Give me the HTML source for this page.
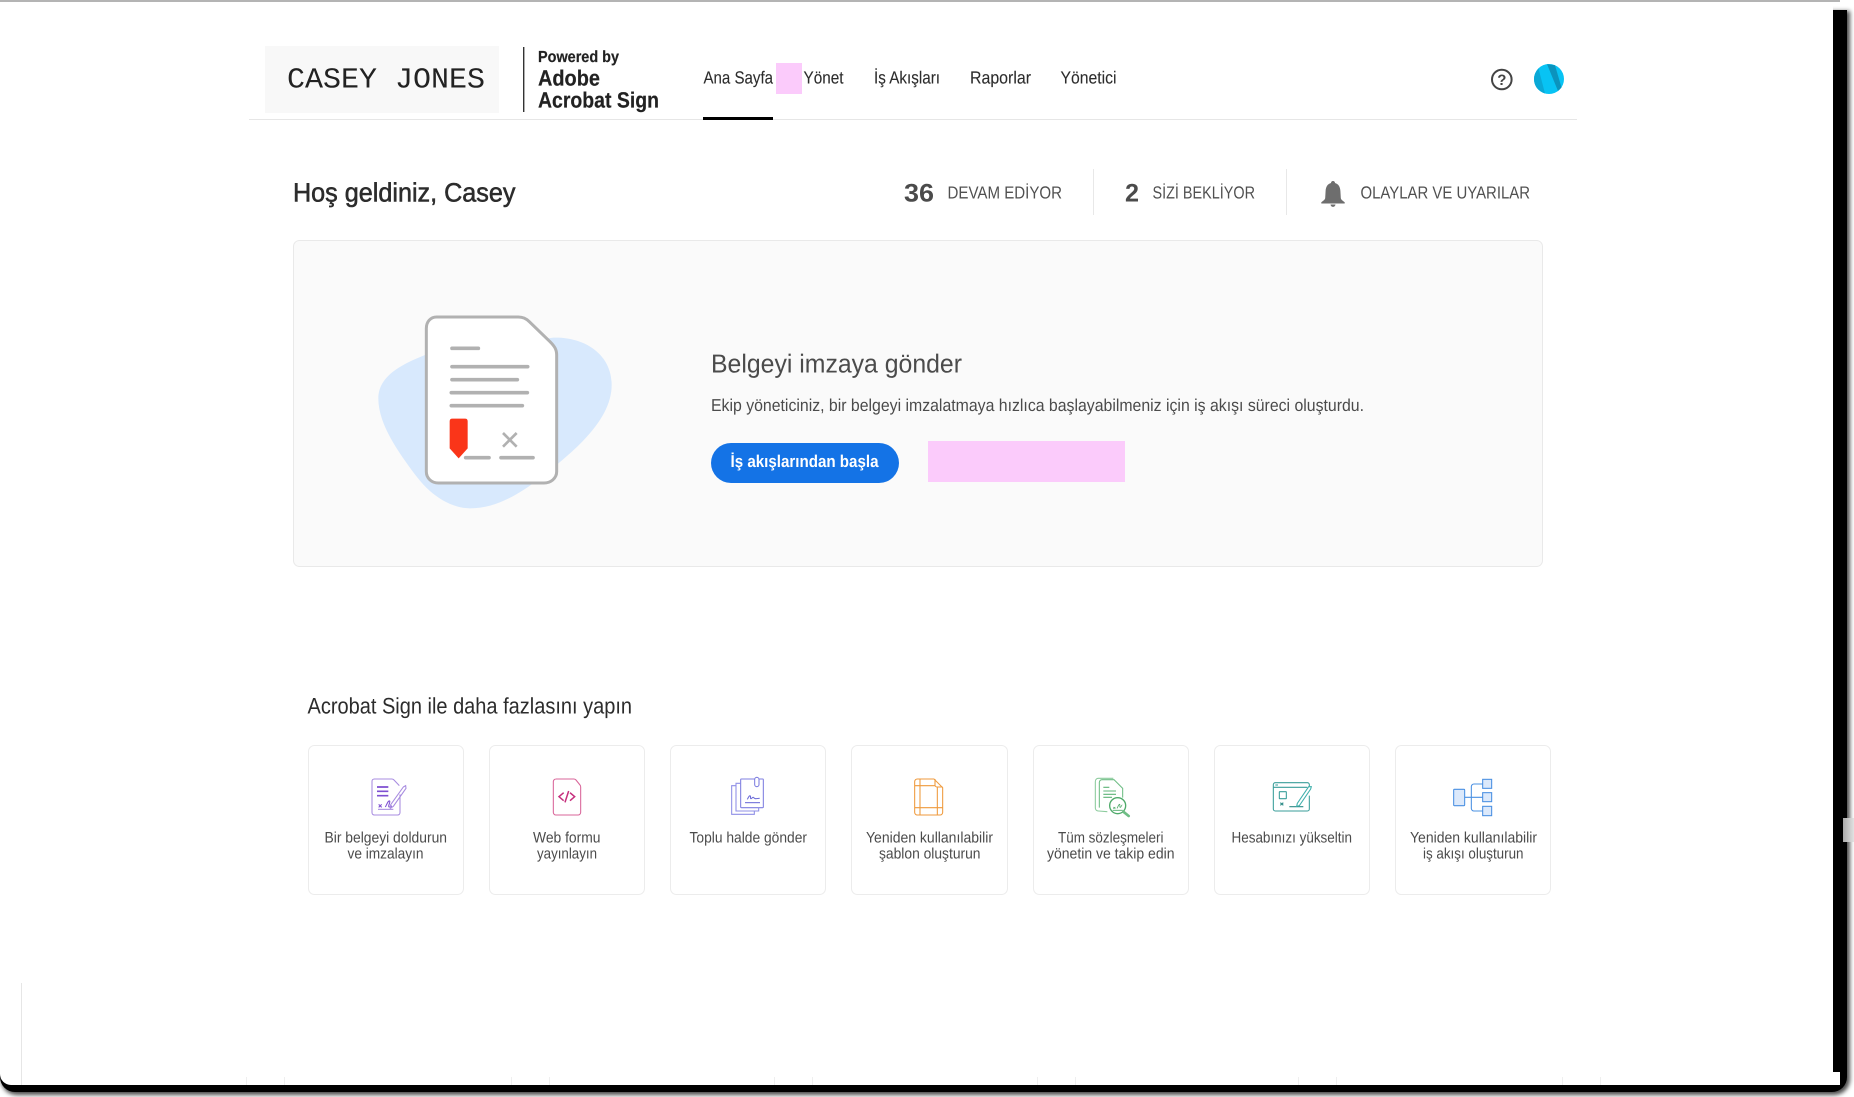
<!DOCTYPE html>
<html lang="tr">
<head>
<meta charset="utf-8">
<title>Adobe Acrobat Sign</title>
<style>
html,body{margin:0;padding:0;width:1854px;height:1097px;overflow:hidden;background:#fff}
#shadow{position:absolute;left:0;top:10px;width:1847px;height:1082px;background:#000;border-radius:0 0 15px 15px;box-shadow:2px 2px 4px 1px rgba(0,0,0,.7)}
#panel{position:absolute;left:0;top:-10px;width:1833px;height:1095px;background:#fff;border-radius:0 0 0 11px}
#notch{position:absolute;left:1833px;top:1072px;width:7px;height:13px;background:#fff}
#topline{position:absolute;left:0;top:0;width:1840px;height:2px;background:#b4b4b4}
#thumb{position:absolute;left:1843px;top:818px;width:11px;height:24px;background:linear-gradient(90deg,#aaa,#e2e2e2)}
svg{position:absolute;left:0;top:0}
text{font-family:"Liberation Sans",sans-serif;fill:#4b4b4b;text-rendering:geometricPrecision}
.nav{font-size:17.5px;fill:#2c2c2c;stroke:#2c2c2c;stroke-width:.1}
.st{font-size:17.5px;fill:#505050}
.num{font-size:25.5px;font-weight:bold;fill:#4b4b4b}
.c{font-size:15.2px;fill:#4b4b4b}
.lg{font-weight:bold;fill:#222;stroke:#222;stroke-width:.2}
</style>
</head>
<body>
<div id="shadow"></div>
<div id="panel"></div>
<div id="notch"></div>
<div id="topline"></div>
<div id="thumb"></div>
<svg width="1854" height="1097" viewBox="0 0 1854 1097" xmlns="http://www.w3.org/2000/svg">
  <!-- header -->
  <rect x="265" y="46" width="234" height="67" fill="#f8f8f8"/>
  <text x="287" y="87.5" style="font-family:'Liberation Mono',monospace;font-size:29px;fill:#222" textLength="198" lengthAdjust="spacingAndGlyphs">CASEY JONES</text>
  <rect x="523" y="47" width="1.4" height="65" fill="#333"/>
  <text class="lg" x="538" y="62" font-size="16" textLength="81" lengthAdjust="spacingAndGlyphs">Powered by</text>
  <text class="lg" x="538" y="85.5" font-size="22" textLength="62" lengthAdjust="spacingAndGlyphs">Adobe</text>
  <text class="lg" x="538" y="107.5" font-size="22" textLength="121" lengthAdjust="spacingAndGlyphs">Acrobat Sign</text>

  <rect x="249" y="119" width="1328" height="1" fill="#e6e6e6"/>
  <rect x="703" y="117" width="70" height="3" fill="#000"/>
  <rect x="776" y="63" width="26" height="31" fill="#fbcbfb"/>

  <text class="nav" x="703.5" y="83.5" textLength="69.5" lengthAdjust="spacingAndGlyphs">Ana Sayfa</text>
  <text class="nav" x="803.5" y="83.5" textLength="40" lengthAdjust="spacingAndGlyphs">Yönet</text>
  <text class="nav" x="874" y="83.5" textLength="66" lengthAdjust="spacingAndGlyphs">İş Akışları</text>
  <text class="nav" x="970" y="83.5" textLength="61" lengthAdjust="spacingAndGlyphs">Raporlar</text>
  <text class="nav" x="1060.5" y="83.5" textLength="56" lengthAdjust="spacingAndGlyphs">Yönetici</text>

  <circle cx="1501.8" cy="79.5" r="9.8" fill="none" stroke="#444" stroke-width="2"/>
  <text x="1501.8" y="85" font-size="15" text-anchor="middle" style="fill:#444;font-weight:bold">?</text>
  <circle cx="1549" cy="79" r="15" fill="#08c3f4"/>
  <path d="M1547 64.1 L1555 65.3 L1561.5 87.5 L1558 91 Z" fill="#0b93bd"/>
  <path d="M1534 79 C1534 75 1536 71 1538.5 68.5 L1545 93.5 C1538 91 1534 86 1534 79 Z" fill="#0aa8d6"/>

  <!-- welcome row -->
  <text x="293" y="201.5" font-size="26.5" style="fill:#2c2c2c;stroke:#2c2c2c;stroke-width:.55" textLength="222.5" lengthAdjust="spacingAndGlyphs">Hoş geldiniz, Casey</text>
  <text class="num" x="904" y="201.5" textLength="30" lengthAdjust="spacingAndGlyphs">36</text>
  <text class="st" x="947.5" y="198.5" textLength="114.5" lengthAdjust="spacingAndGlyphs">DEVAM EDİYOR</text>
  <rect x="1093" y="169" width="1" height="46" fill="#e8e8e8"/>
  <text class="num" x="1125" y="201.5" textLength="14" lengthAdjust="spacingAndGlyphs">2</text>
  <text class="st" x="1152.5" y="198.5" textLength="102.5" lengthAdjust="spacingAndGlyphs">SİZİ BEKLİYOR</text>
  <rect x="1286" y="169" width="1" height="46" fill="#e8e8e8"/>
  <path d="M1333 181 c1.3 0 2 .9 2 2 c3.6 1 5.2 4 5.4 8 l.4 7 c.1 1.5 1.5 2.5 3.9 4.2 v1.3 h-23.4 v-1.3 c2.4-1.7 3.8-2.7 3.9-4.2 l.4-7 c.2-4 1.8-7 5.4-8 c0-1.1 .7-2 2-2z M1330.5 204.5 h5 c-.2 1.5-1.2 2.4-2.5 2.4 s-2.3-.9-2.5-2.4z" fill="#6e6e6e"/>
  <text class="st" x="1360.5" y="198.5" textLength="169.5" lengthAdjust="spacingAndGlyphs">OLAYLAR VE UYARILAR</text>

  <!-- hero -->
  <rect x="293.5" y="240.5" width="1249" height="326" rx="6" fill="#fafafa" stroke="#e9e9e9"/>
  <g transform="translate(340 290) scale(.33333)">
    <path d="M255 195 C180 225 115 260 115 325 C115 400 170 480 230 560 C280 625 340 655 390 655 C470 655 540 610 600 565 C680 500 815 400 815 285 C815 190 730 140 640 143 Z" fill="#d8e9fd"/>
    <path d="M290 81 H535 C550 81 560 87 568 95 L630 155 C643 168 650 178 650 195 V545 C650 565 632 579 612 579 H295 C275 579 259 565 259 545 V115 C259 95 272 81 290 81 Z" fill="#fff" stroke="#b1b1b1" stroke-width="9"/>
    <g stroke="#b1b1b1" stroke-width="11" stroke-linecap="round" fill="none">
      <path d="M336 175 H415"/>
      <path d="M336 230 H563"/>
      <path d="M336 269 H532"/>
      <path d="M334 308 H562"/>
      <path d="M334 347 H547"/>
      <path d="M377 503 H447"/>
      <path d="M483 503 H579"/>
    </g>
    <path d="M489 429 L530 470 M530 429 L489 470" stroke="#b1b1b1" stroke-width="8" fill="none"/>
    <path d="M337 386 H375 Q383 386 383 394 V475 L356 505 L329 475 V394 Q329 386 337 386 Z" fill="#fa3519"/>
  </g>
  <text x="711" y="372.5" font-size="26" style="fill:#4b4b4b" textLength="251" lengthAdjust="spacingAndGlyphs">Belgeyi imzaya gönder</text>
  <text x="711" y="411" font-size="17.2" style="fill:#4b4b4b" textLength="653" lengthAdjust="spacingAndGlyphs">Ekip yöneticiniz, bir belgeyi imzalatmaya hızlıca başlayabilmeniz için iş akışı süreci oluşturdu.</text>
  <rect x="711" y="443" width="188" height="40" rx="20" fill="#1473e6"/>
  <text x="730.5" y="467" font-size="17" style="fill:#fff;font-weight:bold" textLength="148" lengthAdjust="spacingAndGlyphs">İş akışlarından başla</text>
  <rect x="928" y="441" width="197" height="41" fill="#fbcbfb"/>

  <!-- more -->
  <text x="307.5" y="713.5" font-size="22.5" style="fill:#2c2c2c" textLength="324.5" lengthAdjust="spacingAndGlyphs">Acrobat Sign ile daha fazlasını yapın</text>
  <g fill="#fff" stroke="#ececec">
    <rect x="308.5" y="745.5" width="155" height="149" rx="6"/>
    <rect x="489.5" y="745.5" width="155" height="149" rx="6"/>
    <rect x="670.5" y="745.5" width="155" height="149" rx="6"/>
    <rect x="851.5" y="745.5" width="156" height="149" rx="6"/>
    <rect x="1033.5" y="745.5" width="155" height="149" rx="6"/>
    <rect x="1214.5" y="745.5" width="155" height="149" rx="6"/>
    <rect x="1395.5" y="745.5" width="155" height="149" rx="6"/>
  </g>
  <text class="c" x="324.5" y="842.5" textLength="122.5" lengthAdjust="spacingAndGlyphs">Bir belgeyi doldurun</text>
  <text class="c" x="347.5" y="858.5" textLength="76" lengthAdjust="spacingAndGlyphs">ve imzalayın</text>
  <text class="c" x="533" y="842.5" textLength="67.5" lengthAdjust="spacingAndGlyphs">Web formu</text>
  <text class="c" x="537" y="858.5" textLength="60" lengthAdjust="spacingAndGlyphs">yayınlayın</text>
  <text class="c" x="689.5" y="842.5" textLength="117.5" lengthAdjust="spacingAndGlyphs">Toplu halde gönder</text>
  <text class="c" x="866" y="842.5" textLength="127" lengthAdjust="spacingAndGlyphs">Yeniden kullanılabilir</text>
  <text class="c" x="879" y="858.5" textLength="101.5" lengthAdjust="spacingAndGlyphs">şablon oluşturun</text>
  <text class="c" x="1058" y="842.5" textLength="105.5" lengthAdjust="spacingAndGlyphs">Tüm sözleşmeleri</text>
  <text class="c" x="1047" y="858.5" textLength="127.5" lengthAdjust="spacingAndGlyphs">yönetin ve takip edin</text>
  <text class="c" x="1231.5" y="842.5" textLength="120.5" lengthAdjust="spacingAndGlyphs">Hesabınızı yükseltin</text>
  <text class="c" x="1410" y="842.5" textLength="127" lengthAdjust="spacingAndGlyphs">Yeniden kullanılabilir</text>
  <text class="c" x="1423" y="858.5" textLength="100.5" lengthAdjust="spacingAndGlyphs">iş akışı oluşturun</text>

  <!-- icon 1 + 2 -->
  <g transform="translate(350 765) scale(.33333)" fill="none" stroke-width="3.2">
    <path d="M150 88 V143 a7 7 0 0 1 -7 7 H73 a7 7 0 0 1 -7 -7 V49 a7 7 0 0 1 7 -7 H126 a8 8 0 0 1 6 3 L148 62" stroke="#a88ce0"/>
    <path d="M81 66 H115 M81 79 H115 M81 92 H115" stroke="#7e4fd1" stroke-width="5"/>
    <path d="M86 118 l9 9 m0 -9 l-9 9" stroke="#7e4fd1"/>
    <path d="M106 126 c5 -8 8 -20 13 -18 c3 3 -7 17 -1 18 c4 0 5 -3 8 -3" stroke="#7e4fd1"/>
    <path d="M84 133 H130" stroke="#a88ce0"/>
    <path d="M160 66 L167 62 L168 70 L130 124 L121 130 L122 119 Z" stroke="#a88ce0"/>
    <path d="M617 42 H672 a8 8 0 0 1 6 3 L690 60 a8 8 0 0 1 2 6 V142 a8 8 0 0 1 -8 8 H618 a8 8 0 0 1 -8 -8 V50 a8 8 0 0 1 8 -8 Z" stroke="#d9669a"/>
    <path d="M641 83 L627 95 L641 107 M660 83 L674 95 L660 107 M656 78 L645 112" stroke="#c62f7d" stroke-width="4.5"/>
  </g>
  <!-- icon 3 + 4 -->
  <g transform="translate(710 765) scale(.33333)" fill="none" stroke-width="3.2">
    <rect x="92" y="42" width="68" height="86" rx="2" stroke="#7f7fe0"/>
    <path d="M92 55 H78 V138 H146 V128" stroke="#8f8fe6"/>
    <path d="M78 62 H65 V148 H133 V138" stroke="#8f8fe6"/>
    <rect x="134" y="37" width="13" height="28" rx="6.5" fill="#fff" stroke="#7f7fe0"/>
    <path d="M112 103 c4 -7 6 -12 9 -10 c2 2 -1 8 2 8 c3 0 4 -5 7 -4 c2 1 3 4 7 4 c4 0 8 -1 12 -1" stroke="#6c6cd8"/>
    <path d="M105 113 H150" stroke="#6c6cd8"/>
    <path d="M622 42 H672 L698 68 V142 a8 8 0 0 1 -8 8 H622 a8 8 0 0 1 -8 -8 V50 a8 8 0 0 1 8 -8 Z" stroke="#ef9a3d"/>
    <path d="M675 42 V60 a6 6 0 0 0 6 6 H698" stroke="#ef9a3d"/>
    <path d="M630 42 V150 M682 66 V150 M614 62 H675 M614 128 H698" stroke="#ef9a3d"/>
  </g>
  <!-- icon 5,6,7 -->
  <g transform="translate(1070 765) scale(.33333)" fill="none" stroke-width="3.2">
    <path d="M88 128 V52 a8 8 0 0 1 8 -8 H132 L158 70 V98" stroke="#6fbd85"/>
    <path d="M130 40 H86 a9 9 0 0 0 -10 10 V128 a9 9 0 0 0 10 10 L112 140" stroke="#8ccb9d"/>
    <path d="M100 67 H118 M100 78 H138 M100 88 H138 M100 97 H126" stroke="#5fb478"/>
    <circle cx="143" cy="122" r="24" fill="#fff" stroke="#4faa6a" stroke-width="4"/>
    <path d="M130 126 l6 5 m0 -5 l-6 5 M141 130 c3 -4 5 -13 8 -12 c2 2 -1 9 2 9 c3 0 3 -8 6 -7 M128 136 H158" stroke="#4faa6a" stroke-width="2.4"/>
    <path d="M160 140 L176 153" stroke="#6fbd85" stroke-width="8" stroke-linecap="round"/>
    <path d="M718 92 V132 a6 6 0 0 1 -6 6 H616 a6 6 0 0 1 -6 -6 V59 a6 6 0 0 1 6 -6 H712 a6 6 0 0 1 6 6 V64" stroke="#3a9e9a"/>
    <path d="M610 67 H712 M616 60 H624" stroke="#3a9e9a"/>
    <rect x="628" y="80" width="21" height="21" rx="1" stroke="#3a9e9a"/>
    <path d="M631 113 l9 8 m0 -8 l-9 8 M658 125 H700" stroke="#2e8c88"/>
    <path d="M716 65 L724 65 L722 72 L688 122 L680 124 L682 115 Z" fill="#fff" stroke="#3fb0ac"/>
    <rect x="1151" y="73" width="33" height="49" rx="2" fill="#dce9fb" stroke="#4a90e2"/>
    <path d="M1184 97 H1238 M1238 57 H1212 a8 8 0 0 0 -8 8 V130 a8 8 0 0 0 8 8 H1238" stroke="#4a90e2"/>
    <rect x="1238" y="43" width="27" height="27" fill="#dce9fb" stroke="#4a90e2"/>
    <rect x="1238" y="83" width="27" height="27" fill="#dce9fb" stroke="#4a90e2"/>
    <rect x="1238" y="124" width="27" height="28" fill="#dce9fb" stroke="#4a90e2"/>
  </g>

  <!-- faint frame residue -->
  <rect x="21" y="983" width="1" height="102" fill="#e6e6e6"/>
  <g fill="#efefef">
    <rect x="246" y="1077" width="1" height="8"/><rect x="284" y="1077" width="1" height="8"/>
    <rect x="511" y="1077" width="1" height="8"/><rect x="549" y="1077" width="1" height="8"/>
    <rect x="774" y="1077" width="1" height="8"/><rect x="812" y="1077" width="1" height="8"/>
    <rect x="1037" y="1077" width="1" height="8"/><rect x="1075" y="1077" width="1" height="8"/>
    <rect x="1298" y="1077" width="1" height="8"/><rect x="1336" y="1077" width="1" height="8"/>
    <rect x="1562" y="1077" width="1" height="8"/><rect x="1600" y="1077" width="1" height="8"/>
  </g>
</svg>
</body>
</html>
